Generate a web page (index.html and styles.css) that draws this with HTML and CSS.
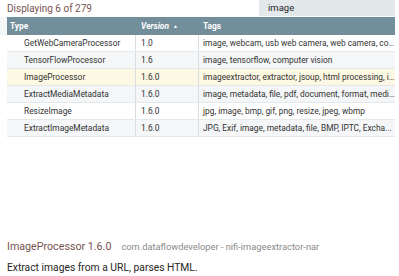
FILE: index.html
```html
<!DOCTYPE html>
<html lang="en">
<head>
  <meta charset="UTF-8" />
  <title>Add Processor</title>
  <link rel="stylesheet" href="styles.css">
</head>
<body>
  <div class="top-bar">
    <div class="displayed">Displaying 6 of 279</div>
    <div class="filter">image</div>
  </div>

  <div class="grid">
    <div class="gutter"></div>
    <div class="table">
      <div class="row head">
        <div class="cell c-type">Type</div>
        <div class="cell c-version">Version <span class="sort">&#9650;</span></div>
        <div class="cell c-tags">Tags</div>
      </div>
      <div class="row">
        <div class="cell c-type">GetWebCameraProcessor</div>
        <div class="cell c-version">1.0</div>
        <div class="cell c-tags">image, webcam, usb web camera, web camera, co...</div>
      </div>
      <div class="row odd">
        <div class="cell c-type">TensorFlowProcessor</div>
        <div class="cell c-version">1.6</div>
        <div class="cell c-tags">image, tensorflow, computer vision</div>
      </div>
      <div class="row selected">
        <div class="cell c-type">ImageProcessor</div>
        <div class="cell c-version">1.6.0</div>
        <div class="cell c-tags">imageextractor, extractor, jsoup, html processing, i...</div>
      </div>
      <div class="row odd">
        <div class="cell c-type">ExtractMediaMetadata</div>
        <div class="cell c-version">1.6.0</div>
        <div class="cell c-tags">image, metadata, file, pdf, document, format, medi...</div>
      </div>
      <div class="row">
        <div class="cell c-type">ResizeImage</div>
        <div class="cell c-version">1.6.0</div>
        <div class="cell c-tags">jpg, image, bmp, gif, png, resize, jpeg, wbmp</div>
      </div>
      <div class="row odd">
        <div class="cell c-type">ExtractImageMetadata</div>
        <div class="cell c-version">1.6.0</div>
        <div class="cell c-tags">JPG, Exif, image, metadata, file, BMP, IPTC, Excha...</div>
      </div>
    </div>
  </div>

  <div class="details">
    <div class="title">
      <span class="name">ImageProcessor 1.6.0</span>
      <span class="bundle">com.dataflowdeveloper - nifi-imageextractor-nar</span>
    </div>
    <p class="desc">Extract images from a URL, parses HTML.</p>
  </div>
</body>
</html>
```

FILE: styles.css
```css
body {
  font-family: 'Roboto', sans-serif;
  background-color: #ffffff;
  margin: 0;
  width: 399px;
  height: 276px;
  overflow: hidden;
  color: #262626;
}

.top-bar {
  display: flex;
  justify-content: space-between;
  align-items: flex-start;
  height: 17px;
}

.displayed {
  color: #775351;
  font-size: 10px;
  margin-left: 7px;
  line-height: 17px;
}

.filter {
  width: 127px;
  height: 16px;
  background-color: #e3e8eb;
  margin-right: 4px;
  padding-left: 9px;
  font-size: 9.5px;
  line-height: 15px;
  color: #262626;
}

.grid {
  display: flex;
}

.gutter {
  width: 7px;
  height: 18px;
  background-color: #f4f6f7;
}

.table {
  width: 388px;
}

.row {
  display: flex;
  height: 17px;
  border-bottom: 1px solid #e5e8ea;
  box-sizing: border-box;
  background-color: #ffffff;
  font-size: 8.4px;
  color: #333333;
}

.row.odd {
  background-color: #f4f6f7;
}

.row.selected {
  background-color: #fcf8e3;
}

.row.head {
  height: 18px;
  background-color: #728e9b;
  color: #ffffff;
  font-weight: bold;
  border-bottom: none;
}

.cell {
  line-height: 17px;
  white-space: nowrap;
  overflow: hidden;
  text-overflow: ellipsis;
  box-sizing: border-box;
  border-right: 1px solid #d8dde0;
}

.head .cell {
  line-height: 18px;
  border-right: none;
}

.c-type {
  width: 129px;
  padding-left: 17px;
}

.head .c-type {
  padding-left: 3px;
}

.c-version {
  width: 63px;
  padding-left: 5px;
}

.head .c-version {
  font-style: italic;
}

.sort {
  font-size: 5px;
  vertical-align: 1px;
  margin-left: 2px;
}

.c-tags {
  width: 196px;
  padding-left: 4px;
  border-right: none;
}

.details {
  margin-top: 103px;
  padding-left: 7px;
}

.title {
  display: flex;
  align-items: baseline;
  gap: 10px;
}

.name {
  color: #775351;
  font-size: 10.7px;
}

.bundle {
  color: #8a8a8a;
  font-size: 9.3px;
}

.desc {
  margin: 8px 0 0 0;
  font-size: 10.3px;
}
```
